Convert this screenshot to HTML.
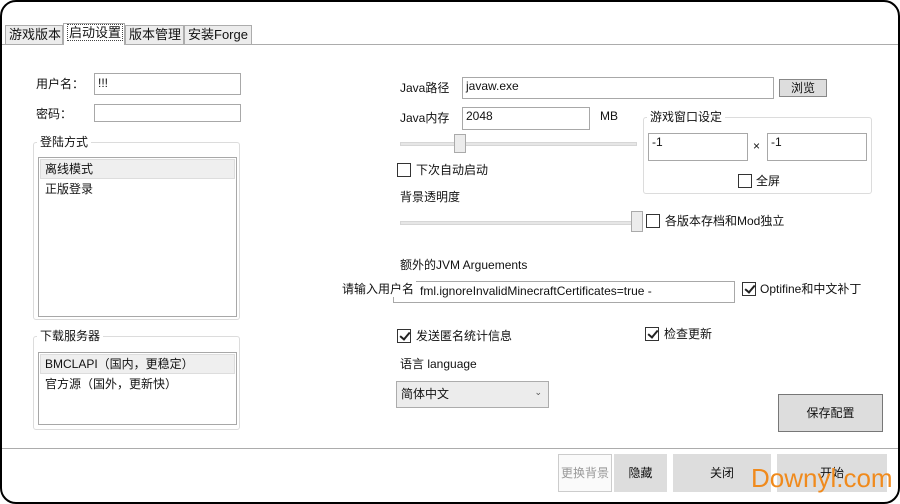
<!DOCTYPE html>
<html><head><meta charset="utf-8"><style>
*{box-sizing:border-box;margin:0;padding:0}
body{width:900px;height:504px;background:#fff;font-family:"Liberation Sans","Noto Sans CJK SC",sans-serif;font-size:12px;color:#111;position:relative;overflow:hidden}
.win{position:absolute;left:0;top:0;width:900px;height:504px;border:2px solid #000;border-radius:16px}
.a{position:absolute;white-space:nowrap}
.in{position:absolute;border:1px solid #a8a8a8;background:#fff;padding:0 3px;line-height:18px}
.tab{position:absolute;top:25px;height:20px;border:1px solid #acacac;background:#ececec;line-height:18px;padding-left:3px;font-size:13px;white-space:nowrap}
.grp{position:absolute;border:1px solid #dcdcdc;border-radius:3px}
.gl{position:absolute;background:#fff;padding:0 3px}
.cb{position:absolute;width:14px;height:14px;border:1px solid #333;background:#fff}
.cb.k::after{content:"";position:absolute;left:4px;top:0px;width:4px;height:8px;border:solid #222;border-width:0 2px 2px 0;transform:rotate(40deg)}
.btn{position:absolute;background:#ddd;text-align:center}
.track{position:absolute;height:4px;background:#e6e6e6;border:1px solid #d6d6d6}
.thumb{position:absolute;width:12px;height:19px;background:#ececec;border:1px solid #aaa}
</style></head><body>
<div class="win"></div>
<div class="a" style="left:2px;top:44px;width:896px;height:1px;background:#acacac"></div>
<div class="tab" style="left:5px;width:58px">游戏版本</div>
<div class="tab" style="left:63px;top:23px;height:22px;width:62px;background:#fff;border-bottom:none"><span style="border:1px dotted #444;padding:0 1px">启动设置</span></div>
<div class="tab" style="left:125px;width:59px">版本管理</div>
<div class="tab" style="left:184px;width:68px">安装Forge</div>

<div class="a" style="left:36px;top:75px">用户名：</div>
<div class="in" style="left:94px;top:73px;width:147px;height:22px">!!!</div>
<div class="a" style="left:36px;top:105px">密码：</div>
<div class="in" style="left:94px;top:104px;width:147px;height:18px"></div>

<div class="grp" style="left:33px;top:142px;width:207px;height:178px"></div>
<div class="gl" style="left:37px;top:133px">登陆方式</div>
<div class="in" style="left:38px;top:157px;width:199px;height:160px;padding:1px"><div style="background:#efefef;border:1px solid #ddd;height:20px;padding-left:4px">离线模式</div><div style="padding-left:5px;line-height:20px">正版登录</div></div>

<div class="grp" style="left:33px;top:336px;width:207px;height:94px"></div>
<div class="gl" style="left:37px;top:327px">下载服务器</div>
<div class="in" style="left:38px;top:352px;width:199px;height:73px;padding:1px"><div style="background:#efefef;border:1px solid #ddd;height:20px;padding-left:4px">BMCLAPI（国内，更稳定）</div><div style="padding-left:5px;line-height:20px">官方源（国外，更新快）</div></div>

<div class="a" style="left:400px;top:79px">Java路径</div>
<div class="in" style="left:462px;top:77px;width:312px;height:22px;line-height:16px">javaw.exe</div>
<div class="btn" style="left:779px;top:79px;width:48px;height:18px;border:1px solid #888;line-height:16px">浏览</div>
<div class="a" style="left:400px;top:109px">Java内存</div>
<div class="in" style="left:462px;top:107px;width:128px;height:23px;line-height:16px">2048</div>
<div class="a" style="left:600px;top:109px">MB</div>
<div class="track" style="left:400px;top:142px;width:237px"></div>
<div class="thumb" style="left:454px;top:134px"></div>
<div class="cb" style="left:397px;top:163px"></div><div class="a" style="left:416px;top:161px">下次自动启动</div>
<div class="a" style="left:400px;top:188px">背景透明度</div>
<div class="track" style="left:400px;top:221px;width:237px"></div>
<div class="thumb" style="left:631px;top:211px;height:21px"></div>
<div class="cb" style="left:646px;top:214px"></div><div class="a" style="left:665px;top:212px">各版本存档和Mod独立</div>

<div class="grp" style="left:643px;top:117px;width:229px;height:77px"></div>
<div class="gl" style="left:647px;top:108px">游戏窗口设定</div>
<div class="in" style="left:648px;top:133px;width:100px;height:28px;line-height:16px">-1</div>
<div class="a" style="left:753px;top:139px">×</div>
<div class="in" style="left:767px;top:133px;width:100px;height:28px;line-height:16px">-1</div>
<div class="cb" style="left:738px;top:174px"></div><div class="a" style="left:756px;top:172px">全屏</div>

<div class="a" style="left:400px;top:256px">额外的JVM Arguements</div>
<div class="in" style="left:393px;top:281px;width:342px;height:22px;overflow:hidden;line-height:18px;padding-left:26px">fml.ignoreInvalidMinecraftCertificates=true -</div>
<div class="a" style="left:342px;top:280px;background:#fff;padding-right:2px">请输入用户名</div>
<div class="cb k" style="left:742px;top:282px"></div><div class="a" style="left:760px;top:280px">Optifine和中文补丁</div>
<div class="cb k" style="left:397px;top:329px"></div><div class="a" style="left:416px;top:327px">发送匿名统计信息</div>
<div class="cb k" style="left:645px;top:327px"></div><div class="a" style="left:664px;top:325px">检查更新</div>
<div class="a" style="left:400px;top:355px">语言 language</div>
<div class="a" style="left:396px;top:381px;width:153px;height:27px;border:1px solid #acacac;background:#ececec;padding:3px 4px">简体中文<span style="position:absolute;right:6px;top:5px;font-size:9px;color:#555">⌄</span></div>
<div class="btn" style="left:778px;top:394px;width:105px;height:38px;border:1px solid #777;line-height:36px">保存配置</div>

<div class="a" style="left:2px;top:448px;width:896px;height:1px;background:#acacac"></div>
<div class="btn" style="left:558px;top:454px;width:54px;height:38px;background:#fafafa;border:1px solid #ccc;color:#999;line-height:36px">更换背景</div>
<div class="btn" style="left:614px;top:454px;width:53px;height:38px;line-height:38px">隐藏</div>
<div class="btn" style="left:673px;top:454px;width:98px;height:38px;line-height:38px">关闭</div>
<div class="btn" style="left:777px;top:454px;width:110px;height:38px;line-height:38px">开始</div>
<div class="a" style="left:751px;top:463px;font-size:26px;color:#f08a1c">Downyl.com</div>
</body></html>
